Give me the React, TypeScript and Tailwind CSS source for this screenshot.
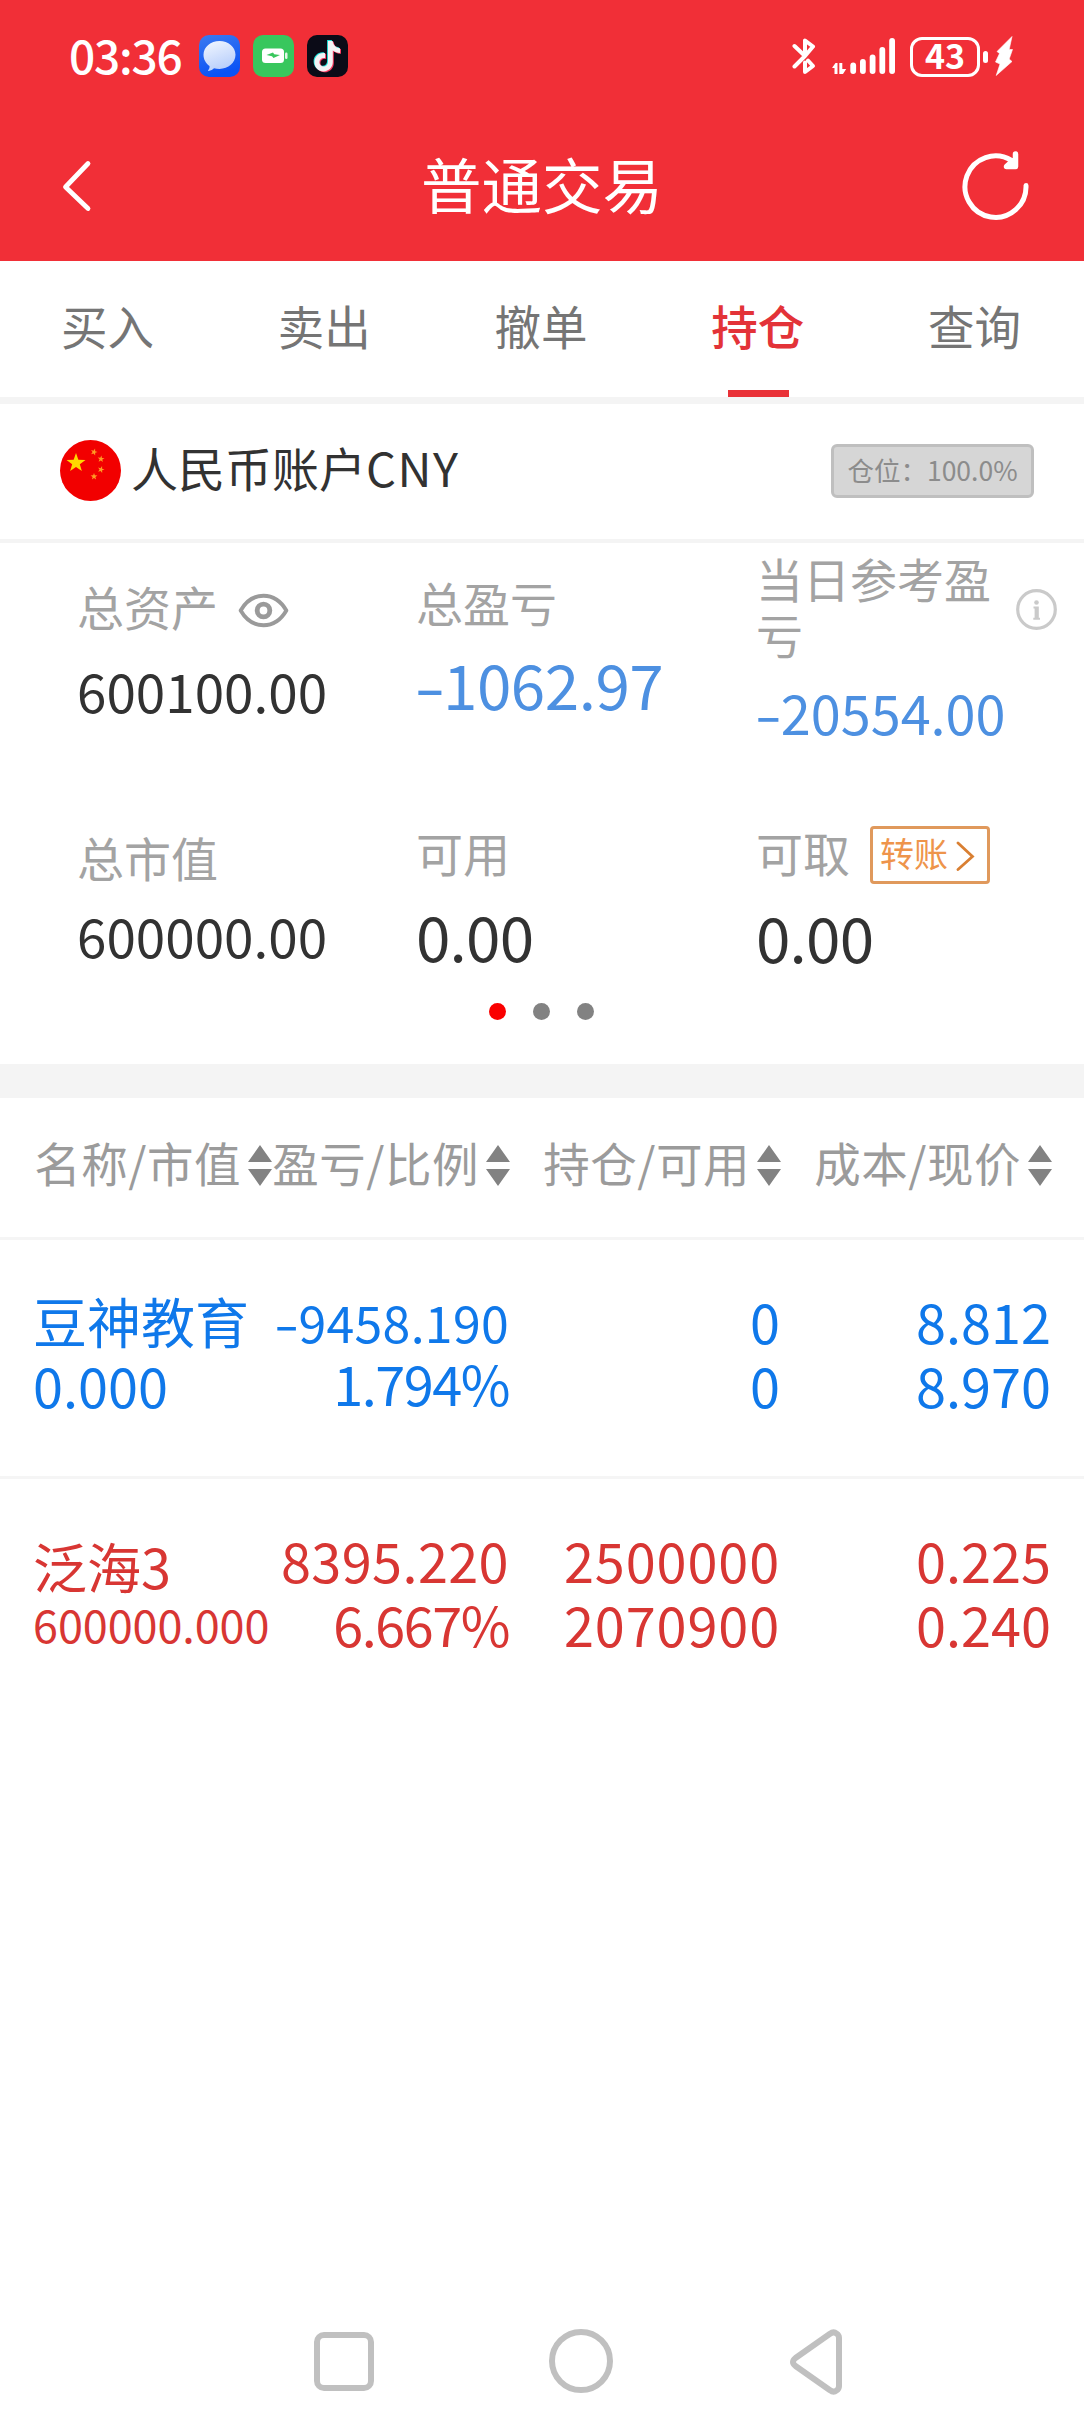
import * as React from "react";
import { clsx } from "clsx";

interface IconProps {
  className?: string;
}

function MessagesIcon({ className }: IconProps) {
  return (
    <svg className={className} viewBox="0 0 41 42">
      <defs>
        <linearGradient id="msg-bg" x1="0" y1="0" x2="0.3" y2="1">
          <stop offset="0" stopColor="#3b7af0" />
          <stop offset="1" stopColor="#0a52f5" />
        </linearGradient>
        <linearGradient id="msg-bubble" x1="0" y1="0" x2="0.4" y2="1">
          <stop offset="0" stopColor="#f3f8ff" />
          <stop offset="1" stopColor="#b9cffb" />
        </linearGradient>
      </defs>
      <rect width="41" height="42" rx="10" fill="url(#msg-bg)" />
      <path
        d="M20.500 6C11.700 6 4.500 12 4.500 19.800c0 4.600 2.300 8.600 6 11.200.3 1.500-.3 3-1.300 4.200-.3.500 0 .8.500.7 2.300-.4 3.800-1.400 5.300-2.700 1.700.5 3.500.7 5.500.7 8.800 0 16-6.200 16-14.100S29.300 6 20.500 6z"
        fill="url(#msg-bubble)"
      />
    </svg>
  );
}

function ChargingIcon({ className }: IconProps) {
  return (
    <svg className={className} viewBox="0 0 41 42">
      <rect width="41" height="42" rx="10" fill="#38c75d" />
      <rect x="9" y="13.500" width="22" height="14.500" rx="3.500" fill="#fff" />
      <rect x="32" y="17.500" width="2.500" height="6.500" rx="1.200" fill="#e3f7e8" />
      <path d="M13.500 20l6.500-2.600 1.200 1.800 5.800.9-6.500 3-1.500-1.800z" fill="#38c75d" />
    </svg>
  );
}

const NOTE_PATH =
  "M20.500 6h4.700c.4 4.200 3.200 7 7.300 7.300v4.700c-2.800 0-5.100-.8-7.200-2.300v11.500c0 5.500-4.200 9.300-9.200 9.300-5.200 0-9.100-4.100-9.100-9.200 0-5.600 4.800-10 10.600-9v5c-2.900-.9-5.700 1.100-5.700 4 0 2.500 1.900 4.300 4.200 4.300 2.500 0 4.400-1.800 4.400-4.700z";

function TiktokIcon({ className }: IconProps) {
  return (
    <svg className={className} viewBox="0 0 41 42">
      <rect width="41" height="42" rx="10" fill="#0b0b17" />
      <path d={NOTE_PATH} fill="#25e5dd" transform="translate(-.4 -.9)" />
      <path d={NOTE_PATH} fill="#fb3d63" transform="translate(1.500 .7)" />
      <path d={NOTE_PATH} fill="#f3f3f5" transform="translate(.5 -.1)" />
    </svg>
  );
}

function BluetoothIcon({ className }: IconProps) {
  return (
    <svg
      className={className}
      viewBox="0 0 24 38"
      fill="none"
      stroke="#fff"
      strokeWidth="4"
      strokeLinecap="round"
      strokeLinejoin="round"
    >
      <path d="M2.500 9l10.500 10 8-9.500L13 3.500V19L2.500 29.500" />
      <path d="M13 25.500V35l8-6-5-5.500" />
    </svg>
  );
}

function SignalIcon({ className }: IconProps) {
  return (
    <svg className={className} viewBox="0 0 64 37">
      <path d="M.3 29.500L3.500 25h2v11H2.500v-6H.3zM7.300 25h3v6h3.900L11 36H7.300z" fill="#fff" />
      <rect x="18.300" y="24.500" width="5.800" height="11.500" rx="2.900" fill="#fff" />
      <rect x="28" y="21" width="5.800" height="15" rx="2.900" fill="#fff" />
      <rect x="37.700" y="16.500" width="5.800" height="19.500" rx="2.900" fill="#fff" />
      <rect x="47.400" y="9" width="5.800" height="27" rx="2.900" fill="#fff" />
      <rect x="57.200" y="0" width="5.800" height="36" rx="2.900" fill="#fff" />
    </svg>
  );
}

function BoltIcon({ className }: IconProps) {
  return (
    <svg className={className} viewBox="0 0 18 40">
      <path
        d="M17 .5L2 15.500l2.500 2L.5 26l4.500 2L1.200 39.500 17 25.500l-2.800-2.500L17.500 13.500h-3.300z"
        fill="#fff"
        stroke="#fff"
        strokeWidth=".6"
        strokeLinejoin="round"
      />
    </svg>
  );
}

function RefreshIcon({ className }: IconProps) {
  return (
    <svg className={className} viewBox="0 0 68 70" fill="none" stroke="#fff" strokeWidth="5">
      <path d="M64 34.500A30.500 30.700 0 1 1 49.500 9.500" strokeLinecap="round" />
      <path d="M53.500 3v12.500H44.500l6-5.500" strokeWidth="5.500" strokeLinecap="round" strokeLinejoin="round" />
    </svg>
  );
}

function star(cx: number, cy: number, r: number, turn = 0) {
  return Array.from({ length: 10 }, (_, i) => {
    const a = (Math.PI / 5) * i - Math.PI / 2 + turn;
    const d = i % 2 ? r * 0.4 : r;
    return `${(cx + d * Math.cos(a)).toFixed(2)},${(cy + d * Math.sin(a)).toFixed(2)}`;
  }).join(" ");
}

function FlagIcon({ className }: IconProps) {
  return (
    <svg className={className} viewBox="0 0 61 61">
      <circle cx="30.500" cy="30.500" r="30.500" fill="#f20000" />
      <polygon points={star(16, 23, 10)} fill="#ffd800" />
      <g fill="#ff9c24">
        <polygon points={star(34, 12, 3.6, 0.3)} />
        <polygon points={star(41, 19, 3.6, 0.1)} />
        <polygon points={star(41, 29.5, 3.6, 0.3)} />
        <polygon points={star(34, 36.5, 3.6)} />
      </g>
    </svg>
  );
}

function EyeIcon({ className }: IconProps) {
  return (
    <svg className={className} viewBox="0 0 52 36" fill="none" stroke="#9a9a9a" strokeWidth="4">
      <path
        d="M2.500 18C8 8.500 16 2.800 26 2.800S44 8.500 49.500 18C44 27.500 36 33.200 26 33.200S8 27.500 2.500 18z"
        strokeLinejoin="round"
      />
      <circle cx="26" cy="18" r="6.500" strokeWidth="5" />
    </svg>
  );
}

function InfoIcon({ className }: IconProps) {
  return (
    <svg className={className} viewBox="0 0 41 41">
      <circle cx="20.500" cy="20.500" r="18.800" fill="none" stroke="#cacaca" strokeWidth="3.200" />
      <circle cx="20.500" cy="13.500" r="2.300" fill="#cacaca" />
      <path d="M17.500 17.500h5.300v11.300h1.200v2h-6.700v-2h1.300v-9.300h-1.100z" fill="#cacaca" />
    </svg>
  );
}

function SortIcon({ className }: IconProps) {
  return (
    <svg className={className} viewBox="0 0 24 41" fill="#828282">
      <path d="M12 0l12 17H0zM12 41l12-17H0z" />
    </svg>
  );
}

// the hyphen of the CJK face is narrow, so it gets stretched a little
function Amount({ value }: { value: string }) {
  if (!value.startsWith("-")) return <>{value}</>;
  return (
    <>
      <span className="mx-[3px] inline-block scale-x-[1.45]">-</span>
      {value.slice(1)}
    </>
  );
}

const TABS = ["买入", "卖出", "撤单", "持仓", "查询"];
const ACTIVE_TAB = "持仓";

const COLUMNS = ["名称/市值", "盈亏/比例", "持仓/可用", "成本/现价"];

interface Cell {
  text: string;
  size?: string;
  leading?: string;
  tracking?: string;
}

interface Holding {
  color: string;
  cells: [Cell, Cell][];
}

const HOLDINGS: Holding[] = [
  {
    color: "text-[#0f78ea]",
    cells: [
      [{ text: "豆神教育" }, { text: "0.000" }],
      [
        { text: "-9458.190", size: "text-[50px]", tracking: "tracking-[0.3px]" },
        { text: "1.794%", leading: "leading-[60px]", tracking: "tracking-[-1.5px]" },
      ],
      [{ text: "0" }, { text: "0" }],
      [{ text: "8.812" }, { text: "8.970" }],
    ],
  },
  {
    color: "text-[#d83633]",
    cells: [
      [
        { text: "泛海3", leading: "leading-[76px]" },
        { text: "600000.000", size: "text-[45px]", tracking: "tracking-[-0.1px]" },
      ],
      [
        { text: "8395.220", tracking: "tracking-[0.4px]" },
        { text: "6.667%", tracking: "tracking-[-1.5px]" },
      ],
      [
        { text: "2500000", tracking: "tracking-[0.9px]" },
        { text: "2070900", tracking: "tracking-[0.9px]" },
      ],
      [{ text: "0.225" }, { text: "0.240" }],
    ],
  },
];

interface StatProps {
  label: React.ReactNode;
  value: string;
  className?: string;
  valueClassName?: string;
}

function Stat({ label, value, className, valueClassName }: StatProps) {
  return (
    <div className={className}>
      <div className="flex text-[47px] leading-[56px] text-[#a3a3a3]">{label}</div>
      <div className={clsx("whitespace-nowrap", valueClassName)}>
        <Amount value={value} />
      </div>
    </div>
  );
}

function StatusBar() {
  return (
    <div className="flex h-[112px] items-center pr-[71px] pl-[69px]">
      <span className="-mt-1 w-[130px] text-[46px] leading-[48px] font-medium tracking-[-1.200px]">03:36</span>
      <div className="flex gap-[13px]">
        <MessagesIcon className="h-[42px] w-[41px]" />
        <ChargingIcon className="h-[42px] w-[41px]" />
        <TiktokIcon className="h-[42px] w-[41px]" />
      </div>
      <div className="ml-auto flex items-center">
        <BluetoothIcon className="mr-4 h-[38px] w-6" />
        <SignalIcon className="mr-3.5 h-[37px] w-16" />
        <span className="mt-0.5 flex h-10 w-[70px] items-center justify-center rounded-xl border-[3px] border-white text-[34px] leading-[34px] font-bold">
          <span className="-mt-1">43</span>
        </span>
        <span className="mt-0.5 ml-[3px] h-3 w-[5px] rounded-full bg-white" />
        <BoltIcon className="ml-[7px] h-10 w-[18px]" />
      </div>
    </div>
  );
}

function Header() {
  return (
    <header className="h-[261px] bg-[#f12f37] text-white">
      <StatusBar />
      <div className="flex h-[147px] items-center justify-between pr-[54px] pl-[61px]">
        <svg className="h-[54px] w-8" viewBox="0 0 32 54" fill="none" stroke="#fff">
          <path d="M27 4.500L4.500 28 27 49.500" strokeWidth="4.800" strokeLinecap="round" strokeLinejoin="round" />
        </svg>
        <h1 className="-mt-1.5 ml-[29px] text-[60.500px] leading-[72px]">普通交易</h1>
        <RefreshIcon className="h-[70px] w-[68px]" />
      </div>
    </header>
  );
}

function Tabs() {
  return (
    <nav className="grid h-[143px] grid-cols-5 border-b-[7px] border-[#f4f4f4]">
      {TABS.map((tab) => {
        const active = tab === ACTIVE_TAB;
        return (
          <div
            key={tab}
            className={clsx(
              "flex flex-col items-center justify-between pt-9 text-[46.500px] leading-[56px]",
              active ? "font-medium text-[#e33338]" : "text-[#757575]"
            )}
          >
            <span className="mr-0.5">{tab}</span>
            {active && <span className="h-[7px] w-[61px] bg-[#e93137]" />}
          </div>
        );
      })}
    </nav>
  );
}

function AccountRow() {
  return (
    <div className="flex h-[139px] items-center border-b-4 border-[#f4f4f4] pr-[50px] pb-0.5 pl-[60px]">
      <FlagIcon className="h-[61px] w-[61px]" />
      <span className="-mt-[7px] ml-2.5 text-[47px] leading-[56px] text-[#323232]">
        人民币账户<span className="tracking-[1.500px]">CNY</span>
      </span>
      <span className="ml-auto flex h-[54px] w-[203px] justify-center rounded-md border-[3px] border-[#bfbfbf] bg-[#d6d6d6] text-[26.500px] leading-[45px] text-[#8c8c8c]">
        仓位：100.0%
      </span>
    </div>
  );
}

function Summary() {
  return (
    <section className="h-[555px] border-b-[34px] border-[#f4f4f4]">
      <div className="grid h-[269px] grid-cols-[339px_340px_1fr] pl-[77px]">
        <Stat
          className="pt-[35px]"
          label={
            <>
              总资产
              <EyeIcon className="mt-[15px] ml-5 h-[35px] w-[51px]" />
            </>
          }
          value="600100.00"
          valueClassName="mt-6 text-[53px] leading-[64px] text-[#323232]"
        />
        <Stat
          className="pt-[31px]"
          label="总盈亏"
          value="-1062.97"
          valueClassName="mt-[17px] text-[62px] leading-[72px] tracking-[-0.500px] text-[#4d90e1]"
        />
        <Stat
          className="pt-[7px]"
          label={
            <>
              <span className="w-[240px]">当日参考盈亏</span>
              <InfoIcon className="mt-[39px] ml-5 h-[41px] w-[41px]" />
            </>
          }
          value="-20554.00"
          valueClassName="mt-[18px] text-[54px] leading-[64px] text-[#4d90e1]"
        />
      </div>
      <div className="grid h-[191px] grid-cols-[339px_340px_1fr] pl-[77px]">
        <Stat
          className="pt-[17px]"
          label="总市值"
          value="600000.00"
          valueClassName="mt-[18px] text-[53px] leading-[64px] text-[#323232]"
        />
        <Stat
          className="pt-3"
          label="可用"
          value="0.00"
          valueClassName="mt-[19px] text-[62px] leading-[72px] tracking-[-0.800px] text-[#323232]"
        />
        <Stat
          className="pt-3"
          label={
            <>
              可取
              <span className="mt-0.5 -mb-1 ml-5 flex h-[58px] w-[120px] items-start rounded border-[3px] border-[#e0995c] pl-[7px] text-[34px] leading-[47px] text-[#ee944b]">
                转账
                <svg className="mt-[12px] ml-2 h-[30px] w-5" viewBox="0 0 20 30" fill="none" stroke="#d97f32">
                  <path d="M2 2l14.500 13.500L2 28.500" strokeWidth="2.800" strokeLinecap="round" />
                </svg>
              </span>
            </>
          }
          value="0.00"
          valueClassName="mt-5 text-[62px] leading-[72px] tracking-[-0.800px] text-[#323232]"
        />
      </div>
      <div className="flex justify-center gap-[27px] pr-0.5">
        <span className="h-[17px] w-[17px] rounded-full bg-[#fa0000]" />
        <span className="h-[17px] w-[17px] rounded-full bg-[#828282]" />
        <span className="h-[17px] w-[17px] rounded-full bg-[#828282]" />
      </div>
    </section>
  );
}

function HoldingsTable() {
  return (
    <section>
      <div className="grid h-[142px] grid-cols-[272px_238px_271px_271px] border-b-[3px] border-[#f5f5f5] pt-9">
        {COLUMNS.map((title) => (
          <div
            key={title}
            className="flex justify-end text-[46.500px] leading-[56px] tracking-[0.500px] whitespace-nowrap text-[#9b9b9b]"
          >
            {title}
            <SortIcon className="mt-[11px] ml-[7px] h-[41px] w-6 shrink-0" />
          </div>
        ))}
      </div>
      {HOLDINGS.map((holding, row) => (
        <div
          key={row}
          className={clsx(
            "grid h-[239px] grid-cols-[270px_239px_271px_271px] pt-[49px]",
            row < HOLDINGS.length - 1 && "border-b-[3px] border-[#f5f5f5]",
            holding.color
          )}
        >
          {holding.cells.map((pair, col) => (
            <div key={col} className={col === 0 ? "pl-[33px]" : "text-right"}>
              {pair.map(({ text, size = "text-[54px]", leading = "leading-[64px]", tracking }) => (
                <div key={text + size} className={clsx("h-16 whitespace-nowrap", size, leading, tracking)}>
                  <Amount value={text} />
                </div>
              ))}
            </div>
          ))}
        </div>
      ))}
    </section>
  );
}

function NavBar() {
  return (
    <div className="mt-auto flex h-[83px] items-start pl-[314px]">
      <span className="mt-[3px] h-[59px] w-[60px] rounded-[10px] border-[6.500px] border-[#c0c0c0]" />
      <span className="ml-[175px] h-16 w-16 rounded-full border-[6.500px] border-[#c0c0c0]" />
      <svg className="ml-[176px] h-[66px] w-[54px]" viewBox="0 0 54 66" fill="none" stroke="#c0c0c0">
        <path
          d="M41 4.800Q44.500 2 47.500 4.500Q50 6 50 9V57Q50 60 47.500 61.500Q44.500 64 41 61.200L6.500 37Q1.500 33 6.500 29z"
          strokeWidth="6"
          strokeLinejoin="round"
        />
      </svg>
    </div>
  );
}

export default function App() {
  return (
    <div className="flex h-[2412px] w-[1084px] flex-col overflow-hidden bg-white font-['Noto_Sans_CJK_SC',sans-serif]">
      <Header />
      <Tabs />
      <AccountRow />
      <Summary />
      <HoldingsTable />
      <NavBar />
    </div>
  );
}
